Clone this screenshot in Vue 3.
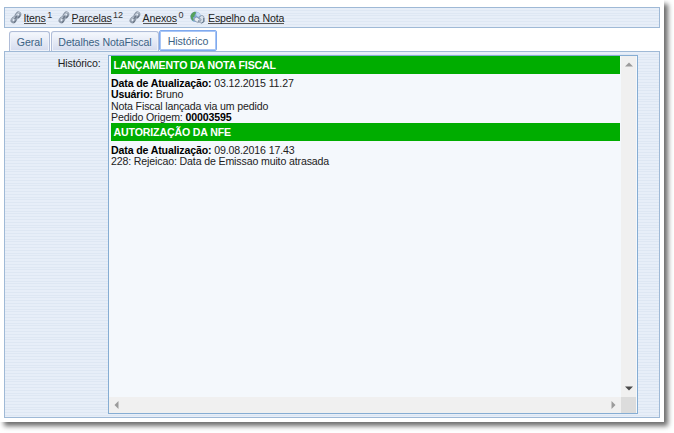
<script setup>
const links = [
  { label: 'Itens', count: '1', cls: 'itens' },
  { label: 'Parcelas', count: '12', cls: 'parcelas' },
  { label: 'Anexos', count: '0', cls: 'anexos' },
]
const tabs = [
  { label: 'Geral', cls: 'geral' },
  { label: 'Detalhes NotaFiscal', cls: 'detalhes' },
  { label: 'Histórico', cls: 'active' },
]
const entries = [
  {
    title: 'LANÇAMENTO DA NOTA FISCAL',
    lines: [
      { bold: 'Data de Atualização:', text: ' 03.12.2015 11.27' },
      { bold: 'Usuário:', text: ' Bruno' },
      { text: 'Nota Fiscal lançada via um pedido' },
      { text: 'Pedido Origem: ', tail: '00003595' },
    ],
  },
  {
    title: 'AUTORIZAÇÃO DA NFE',
    lines: [
      { bold: 'Data de Atualização:', text: ' 09.08.2016 17.43' },
      { text: '228: Rejeicao: Data de Emissao muito atrasada' },
    ],
  },
]
</script>

<template>
  <div class="page">
    <div class="window">
      <nav class="toolbar striped">
        <a v-for="l in links" :key="l.label" class="link" :class="l.cls">
          <svg class="chain" width="12" height="13" viewBox="0 0 12 13">
            <g fill="none" stroke-linecap="round">
              <g stroke="#8b97a7" stroke-width="2">
                <rect x="-2.7" y="-1.8" width="5.4" height="3.6" rx="1.8" transform="translate(7.9 4) rotate(-52)" />
                <rect x="-2.7" y="-1.8" width="5.4" height="3.6" rx="1.8" transform="translate(3.9 8.8) rotate(-52)" />
              </g>
              <path d="M6 4.2 7.9 1.8q1.3-.8 2.2.3M1.9 8.9l1.6-2.2q1-.6 1.8 0" stroke="#c6cfda" stroke-width=".9" />
              <path d="M10 5.2 8.6 6.7M5.7 10 4.5 11.4" stroke="#657181" stroke-width="1.1" />
              <path d="M4.7 7.9 7.2 4.9" stroke="#6b7787" stroke-width="1.2" />
            </g>
          </svg>
          <span class="name">{{ l.label }}</span><span class="count">{{ l.count }}</span>
        </a>
        <a class="link mirror">
          <svg class="globe" width="15" height="13" viewBox="0 0 15 13">
            <circle cx="5.6" cy="5.8" r="5.3" fill="#82a9d8" />
            <path d="M.5 5Q1.5 1.4 4.8.7l1.4 1-1.4 2.1-.4 2-1.6.8.8 2.4L3 9.9Q.6 8 .5 5Z" fill="#55a15b" />
            <path d="M6.4 1.1q3.2.3 4.3 3L8.2 6 6.2 4.3Z" fill="#c4dbf4" />
            <path d="M4.2 7.4 6.8 6l3.3 2.5-.2 2.4-2.4.7-3.2-2.2Z" fill="#e6ecf3" stroke="#8493a5" stroke-width=".8" />
            <path d="m9 6.2 2.9-1.9 2 1.4.2 5-2.4 1.5-2.2-.9 1.7-2.5Z" fill="#d9e1ea" stroke="#8493a5" stroke-width=".8" />
            <path d="M13.8 7v3.6l-2.3 1.3M8.9 9.3l-.9 1.6" fill="none" stroke="#5b6f86" stroke-width="1" />
          </svg>
          <span class="name">Espelho da Nota</span>
        </a>
      </nav>

      <div class="tabs">
        <button v-for="t in tabs" :key="t.label" class="tab" :class="t.cls"><span>{{ t.label }}</span></button>
      </div>

      <section class="panel striped">
        <label class="label">Histórico:</label>
        <div class="box">
          <div class="content">
            <article v-for="e in entries" :key="e.title">
              <h3>{{ e.title }}</h3>
              <p v-for="(l, i) in e.lines" :key="i"><b v-if="l.bold">{{ l.bold }}</b>{{ l.text }}<b v-if="l.tail">{{ l.tail }}</b></p>
            </article>
          </div>
          <div class="vbar">
            <svg width="8" height="5" viewBox="0 0 8 5"><path d="M0 4.5 4 .5l4 4Z" fill="#9b9b9b" /></svg>
            <svg width="8" height="5" viewBox="0 0 8 5"><path d="M0 .5h8l-4 4Z" fill="#494949" /></svg>
          </div>
          <div class="hbar">
            <svg width="5" height="8" viewBox="0 0 5 8"><path d="M4.5 0v8l-4-4Z" fill="#9b9b9b" /></svg>
            <svg width="5" height="8" viewBox="0 0 5 8"><path d="M.5 0v8l4-4Z" fill="#9b9b9b" /></svg>
          </div>
          <div class="corner"></div>
        </div>
      </section>
    </div>
  </div>
</template>

<style>
body { margin: 0; background: #fff; overflow: hidden; }
</style>

<style scoped>
* { box-sizing: border-box; }
.page {
  width: 674px;
  height: 433px;
  overflow: hidden;
  background: #fff;
  font-family: "Liberation Sans", Arial, sans-serif;
  font-size: 10.6px;
  letter-spacing: -.14px;
  color: #222;
}
.window {
  width: 664px;
  height: 422px;
  padding: 7px 4px 4px;
  background: #fff;
  box-shadow: 4px 4px 5px rgba(0, 0, 0, .58);
}
.striped {
  background: repeating-linear-gradient(to bottom, #e7eef8 0, #e7eef8 1.8px, #dee7f3 1.8px, #dee7f3 2.8px);
  border: 1px solid #9fb9d6;
}
.toolbar {
  display: flex;
  align-items: center;
  height: 21px;
  padding-left: 5px;
}
.link {
  display: flex;
  align-items: center;
  height: 19px;
}
.itens { width: 48px; }
.parcelas { width: 71px; }
.anexos { width: 61px; }
.chain { margin: 0 1.5px 0 0; flex: none; }
.globe { margin-right: 3px; flex: none; }
.name {
  line-height: 12px;
  border-bottom: 1px solid #555;
  height: 12px;
  margin-top: 1px;
}
.count {
  font-size: 9px;
  margin: -5px 0 0 1.5px;
  color: #333;
}
.tabs {
  display: flex;
  align-items: flex-end;
  gap: 1px;
  height: 23px;
  padding-left: 5px;
}
.tab {
  height: 20px;
  padding: 0;
  border: 1px solid #b0bdd8;
  border-bottom: 0;
  border-radius: 3px 3px 0 0;
  background: linear-gradient(#f5f8fd, #e5eaf6 50%, #d5dcee);
  box-shadow: inset 0 0 0 1px #eef2fa;
  font: inherit;
  letter-spacing: -.08px;
  color: #3b6284;
  line-height: 18px;
}
.geral { width: 41px; }
.detalhes { width: 108px; }
.active {
  width: 58px;
  height: 21px;
  border: 1px solid #7fa9ee;
  border-radius: 2px;
  background: #fff;
  box-shadow: inset 0 0 0 1px #a9c6f5;
  margin-left: -1px;
}
.panel {
  display: flex;
  width: 656px;
  height: 367px;
  padding: 3px 0 0;
}
.label {
  width: 103px;
  padding: 2px 7.5px 0 0;
  text-align: right;
  line-height: 12px;
  flex: none;
}
.box {
  display: grid;
  grid-template-columns: 512px 15px;
  grid-template-rows: 341px 16px;
  width: 530px;
  height: 359px;
  border: 1px solid #86add3;
  background: #f4f8fc;
}
.content { padding: 0 1px 0 2px; }
h3 {
  margin: 0 0 4px;
  height: 18px;
  padding-left: 2.5px;
  background: #00ad00;
  color: #fff;
  font-size: 10.6px;
  line-height: 18px;
}
p {
  margin: 0;
  height: 11.3px;
  line-height: 11.3px;
  white-space: pre;
}
b { color: #000; }
.vbar, .hbar {
  display: flex;
  justify-content: space-between;
  align-items: center;
  background: #f0f0f0;
}
.vbar { flex-direction: column; padding: 6px 0; }
.hbar { padding: 0 5px 0 5px; }
.corner { background: #dcdcdc; }
</style>
